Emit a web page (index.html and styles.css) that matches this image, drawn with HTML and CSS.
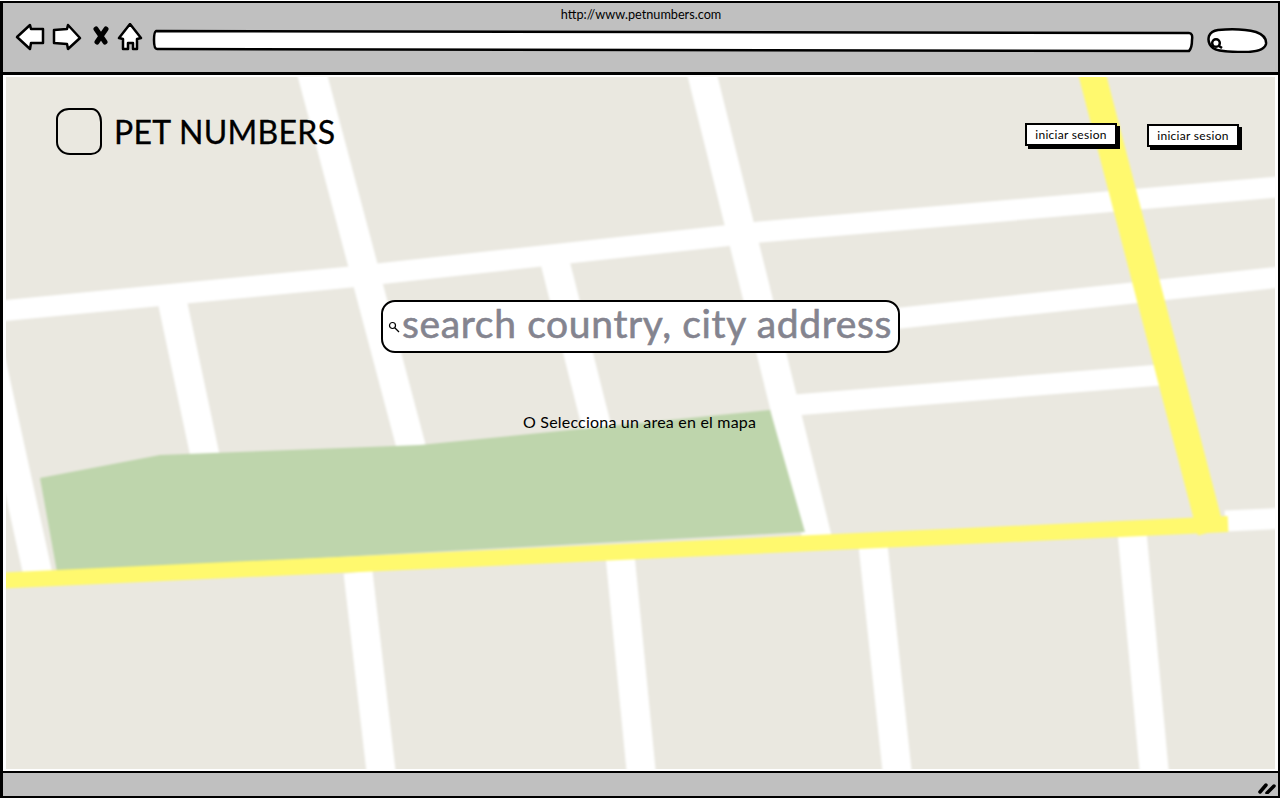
FILE: index.html
```html
<!DOCTYPE html>
<html>
<head>
    <title>Pet Numbers</title>
    <link rel="stylesheet" href="styles.css">
</head>
<body>
    <div class="window">
        <div class="toolbar">
            <div class="url-title">http://www.petnumbers.com</div>
            <div class="nav-row">
                <svg class="nav-icons" width="130" height="30" viewBox="0 0 130 30">
                    <path class="nav-shape" d="M2 14 L15 2 L16 6 L28 6 L28 20 L16 20 L15 26 Z"/>
                    <path class="nav-shape" d="M39 7 L52 6 L53 2 L65 15 L53 26 L52 21 L39 20 Z"/>
                    <path class="nav-x" d="M81 6 L90 19 M91 6 L82 19"/>
                    <path class="nav-shape" d="M115 1 L126 15 L122 16 L122 26 L118 26 L118 20 L113 20 L113 26 L108 26 L108 16 L104 15 Z"/>
                </svg>
                <svg class="address-bar" width="1044" height="30" viewBox="0 0 1044 30">
                    <path class="bar-shape" d="M4 8 L500 9 L1037 10 Q1041 10 1040 17 Q1040 25 1037 28 L500 27 L5 26 Q2 26 2 17 Q2 9 4 8 Z"/>
                </svg>
                <svg class="search-pill" width="64" height="30" viewBox="0 0 64 30">
                    <path class="bar-shape" d="M12 7 Q35 5 50 9 Q61 13 60 21 Q58 29 38 29 Q12 29 7 25 Q1 20 3 13 Q5 8 12 7 Z"/>
                    <circle class="lens-thick" cx="10" cy="20" r="3.8"/>
                    <path class="lens-thick" d="M13 23 L16 25"/>
                </svg>
            </div>
        </div>
        <div class="map">
            <svg class="map-art" width="1269" height="692" viewBox="6 77 1269 692">
                <g class="map-blur">
                    <rect x="-20" y="50" width="1320" height="750" fill="#eae8e0"/>
                    <g class="road">
                        <path d="M311 70 L420 480"/>
                        <path d="M701 70 L818 541"/>
                        <path d="M172 300 L208 470"/>
                        <path d="M555 262 L600 440"/>
                        <path d="M-20 310 L38 575"/>
                        <path d="M358 572 L382 780"/>
                        <path d="M620 555 L642 780"/>
                        <path d="M873 545 L898 780"/>
                        <path d="M1132 532 L1155 780"/>
                    </g>
                    <g class="road road-thin">
                        <path d="M-10 312 L350 277 L760 232 L1290 186"/>
                        <path d="M790 330 L1290 276"/>
                        <path d="M795 405 L1160 375"/>
                        <path d="M1225 521 L1290 518"/>
                    </g>
                    <polygon points="40,478 160,455 420,445 770,410 805,532 57,572" fill="#bed5ac"/>
                    <g class="highway">
                        <path d="M1091 70 L1211 532"/>
                        <path class="highway-thin" d="M-10 581 L1228 524"/>
                    </g>
                </g>
            </svg>
            <div class="map-header">
                <div class="brand">
                    <div class="logo-box"></div>
                    <span class="brand-name">PET NUMBERS</span>
                </div>
                <div class="actions">
                    <button class="btn" type="button">iniciar sesion</button>
                    <button class="btn btn-low" type="button">iniciar sesion</button>
                </div>
            </div>
            <div class="search-box">
                <svg width="12" height="12" viewBox="0 0 12 12">
                    <circle class="lens" cx="4.5" cy="4.5" r="3"/>
                    <path class="lens" d="M7 7 L11 11"/>
                </svg>
                <span class="search-text">search country, city address</span>
            </div>
            <p class="hint">O Selecciona un area en el mapa</p>
        </div>
        <div class="statusbar">
            <svg width="18" height="14" viewBox="0 0 18 14">
                <path class="grip" d="M2 12 L8 5 M9 13 L16 6"/>
            </svg>
        </div>
    </div>
</body>
</html>
```

FILE: styles.css
```css
* {
    box-sizing: border-box;
}

html, body {
    margin: 0;
    height: 100%;
}

body {
    font-family: Lato, "Open Sans", sans-serif;
    background-color: #fff;
}

.window {
    height: 797px;
    margin-top: 1px;
    display: flex;
    flex-direction: column;
    border: 2px solid #000;
    border-left-width: 3px;
}

/* top browser chrome */
.toolbar {
    height: 72px;
    background-color: #c0c0c0;
    border-bottom: 3px solid #000;
    padding: 3px 8px 0 12px;
}

.url-title {
    text-align: center;
    font-size: 12.7px;
    line-height: 16px;
    color: #000;
    padding-right: 3px;
}

.nav-row {
    display: flex;
    margin-top: 1px;
}

.nav-icons,
.address-bar,
.search-pill {
    flex: none;
}

.address-bar {
    margin-left: 7px;
}

.search-pill {
    margin-left: 10px;
}

.nav-shape,
.bar-shape {
    fill: #fff;
    stroke: #000;
    stroke-width: 2.5;
    stroke-linejoin: round;
}

.nav-x {
    fill: none;
    stroke: #000;
    stroke-width: 5;
    stroke-linecap: round;
}

.lens-thick {
    fill: none;
    stroke: #000;
    stroke-width: 2.5;
}

/* map canvas */
.map {
    position: relative;
    flex: 1;
    border: 2px solid #fff;
    border-left-width: 3px;
    border-right-width: 3px;
    overflow: hidden;
}

.map-art {
    position: absolute;
    top: 0;
    left: 0;
}

.map-blur {
    filter: blur(0.8px);
}

.road path {
    fill: none;
    stroke: #fff;
    stroke-width: 29;
}

.road-thin path {
    stroke-width: 21;
}

.highway path {
    fill: none;
    stroke: #fff96e;
    stroke-width: 27;
}

.highway .highway-thin {
    stroke-width: 16;
}

.map-header {
    position: relative;
    display: flex;
    justify-content: space-between;
    align-items: flex-start;
    padding: 31px 36px 0 50px;
}

.brand {
    display: flex;
    align-items: center;
    gap: 12px;
}

.logo-box {
    width: 46px;
    height: 47px;
    border: 2px solid #000;
    border-radius: 13px 10px 11px 14px / 11px 14px 10px 13px;
}

.brand-name {
    font-size: 32px;
    line-height: 47px;
    letter-spacing: 0.3px;
    color: #000;
    -webkit-text-stroke: 0.3px #000;
}

.actions {
    display: flex;
    gap: 30px;
    padding-top: 15px;
}

.btn {
    width: 92px;
    height: 23px;
    padding: 0;
    font-family: inherit;
    font-size: 12px;
    letter-spacing: 0.3px;
    color: #000;
    background-color: #fff;
    border: 2px solid #000;
    box-shadow: 3px 3px 0 #000;
}

.btn-low {
    margin-top: 1px;
}

.search-box {
    position: relative;
    width: 519px;
    height: 53px;
    margin: 145px 0 0 375px;
    display: flex;
    align-items: center;
    gap: 2px;
    padding: 0 0 7px 5px;
    background-color: #fff;
    border: 2px solid #000;
    border-radius: 14px;
}

.search-box svg {
    margin-top: 7px;
}

.lens {
    fill: none;
    stroke: #000;
    stroke-width: 1.2;
}

.search-text {
    font-size: 39px;
    line-height: 46px;
    letter-spacing: 0.65px;
    color: #84848f;
    white-space: nowrap;
    -webkit-text-stroke: 0.6px #84848f;
}

.hint {
    position: relative;
    width: 236px;
    margin: 58px 0 0 517px;
    font-size: 16px;
    line-height: 22px;
    letter-spacing: 0.2px;
    color: #000;
    white-space: nowrap;
}

.statusbar {
    height: 25px;
    display: flex;
    justify-content: flex-end;
    align-items: flex-end;
    padding: 0 2px 2px 0;
    background-color: #c0c0c0;
    border-top: 2px solid #000;
}

.grip {
    fill: none;
    stroke: #000;
    stroke-width: 3.5;
    stroke-linecap: round;
}
```
